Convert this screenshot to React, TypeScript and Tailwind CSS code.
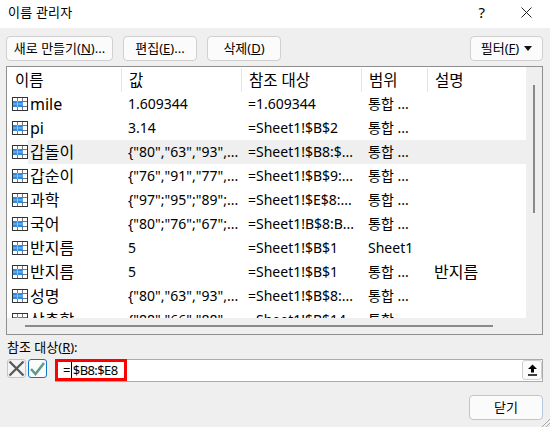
import React from 'react';

const font = { fontFamily: '"Noto Sans", "Noto Sans CJK KR", sans-serif' };

const rows = [
  ['mile', '1.609344', '=1.609344', '통합 ...', ''],
  ['pi', '3.14', '=Sheet1!$B$2', '통합 ...', ''],
  ['갑돌이', '{"80","63","93",...', '=Sheet1!$B8:$...', '통합 ...', ''],
  ['갑순이', '{"76","91","77",...', '=Sheet1!$B$9:...', '통합 ...', ''],
  ['과학', '{"97";"95";"89";...', '=Sheet1!$E$8:...', '통합 ...', ''],
  ['국어', '{"80";"76";"67";...', '=Sheet1!B$8:B...', '통합 ...', ''],
  ['반지름', '5', '=Sheet1!$B$1', 'Sheet1', ''],
  ['반지름', '5', '=Sheet1!$B$1', '통합 ...', '반지름'],
  ['성명', '{"80","63","93",...', '=Sheet1!$B$8:...', '통합 ...', ''],
  ['상총합', '{"88","66","88",...', '=Sheet1!$B$14', '통합 ...', ''],
];

function NameIcon() {
  return (
    <svg width="16" height="14" viewBox="0 0 16 14" className="shrink-0">
      <rect x="0.5" y="0.5" width="15" height="13" fill="#fff" stroke="#333" />
      <path d="M5.5 1V13M10.5 1V13M1 4.5H15M1 9.5H15" stroke="#777" fill="none" />
      <rect x="1" y="4" width="10" height="6" fill="#2f8be0" />
      <path d="M5.5 4V10M1 7H11" stroke="#8cc0ee" fill="none" />
    </svg>
  );
}

function Btn({ className, children }: { className: string; children: React.ReactNode }) {
  return (
    <div className={`flex h-[25px] items-center justify-center rounded-[4px] border border-[#cfcfcf] bg-[#fbfbfb] text-[13px] text-black ${className}`}>
      {children}
    </div>
  );
}

export default function App() {
  return (
    <div style={font} className="relative flex h-[427px] w-[550px] flex-col overflow-hidden bg-[#efefef] text-black">
      {/* Title bar */}
      <div className="flex h-[28px] shrink-0 items-start justify-between bg-white pl-[8px] pr-[18px]">
        <span className="mt-[3px] text-[13px] leading-[18px] tracking-[0.2px]">이름 관리자</span>
        <div className="flex items-center gap-[36px] pt-[3px]">
          <span className="text-[15px] leading-[18px]">?</span>
          <svg width="11" height="11" viewBox="0 0 11 11">
            <path d="M0.5 0.5L10.5 10.5M10.5 0.5L0.5 10.5" stroke="#222" fill="none" />
          </svg>
        </div>
      </div>

      {/* Toolbar */}
      <div className="mt-[8px] flex shrink-0 pl-[6px] pr-[7px]">
        <Btn className="w-[107px]">
          <span>새로 만들기(<u>N</u>)...</span>
        </Btn>
        <Btn className="ml-[10px] w-[74px]">
          <span>편집(<u>E</u>)...</span>
        </Btn>
        <Btn className="ml-[10px] w-[74px]">
          <span>삭제(<u>D</u>)</span>
        </Btn>
        <Btn className="ml-auto w-[73px] gap-[5px]">
          <span>필터(<u>F</u>)</span>
          <svg width="8" height="5" viewBox="0 0 8 5">
            <path d="M0 0H8L4 5Z" fill="#111" />
          </svg>
        </Btn>
      </div>

      {/* Name list */}
      <div className="ml-[6px] mr-[7px] mt-[5px] flex h-[269px] shrink-0 flex-col border border-[#8f8f8f] bg-[#efefef]">
        <div className="flex min-h-0 flex-1">
          <div className="w-[519px] shrink-0 overflow-hidden bg-white">
            <div className="mt-[1px] grid h-[24px] grid-cols-[114px_120px_120px_66px_99px] text-[15.5px]">
              <div className="pl-[8px] leading-[24px]">이름</div>
              {['값', '참조 대상', '범위', '설명'].map((h) => (
                <div key={h} className="border-l border-[#e5e5e5] pl-[7px] leading-[24px]">
                  {h}
                </div>
              ))}
            </div>
            {rows.map((r, i) => (
              <div key={i} className="grid h-[24px] grid-cols-[114px_120px_120px_66px_99px] items-center text-[14px]">
                <div className="relative flex h-full items-center pl-[5px]">
                  {i === 2 && <div className="absolute inset-y-0 left-[21px] right-0 bg-[#efefef]" />}
                  <div className="relative flex items-center gap-[2px] text-[16px]">
                    <NameIcon />
                    <span className="leading-[22px]">{r[0]}</span>
                  </div>
                </div>
                {r.slice(1).map((c, j) => (
                  <div
                    key={j}
                    className={`flex h-full items-center overflow-hidden whitespace-nowrap pb-[1px] pl-[7px] ${j === 3 ? 'text-[16px]' : ''} ${i === 2 ? 'bg-[#efefef]' : ''}`}
                  >
                    {c}
                  </div>
                ))}
              </div>
            ))}
          </div>
          {/* Vertical scrollbar */}
          <div className="flex-1 pl-[7px] pt-[18px]">
            <div className="h-[128px] w-[2px] bg-[#8a8a8a]" />
          </div>
        </div>
        {/* Horizontal scrollbar */}
        <div className="flex h-[16px] shrink-0 items-center pb-[1px] pl-[18px]">
          <div className="h-[2px] w-[468px] bg-[#8a8a8a]" />
        </div>
      </div>

      {/* Reference field */}
      <div className="mt-[3px] px-[7px] text-[13px] leading-[18px]">
        참조 대상(<u>R</u>):
      </div>
      <div className="mt-[3px] flex items-start pl-[7px] pr-[7px]">
        <div className="flex h-[19px] w-[19px] items-center justify-center rounded-[3px] border border-[#c4c4c4] bg-[#f4f4f4]">
          <svg width="17" height="17" viewBox="0 0 17 17">
            <path d="M1.5 1.5L15.5 15.5M15.5 1.5L1.5 15.5" stroke="#5a5a5a" strokeWidth="2.4" fill="none" />
          </svg>
        </div>
        <div className="ml-[2px] flex h-[19px] w-[19px] items-center justify-center rounded-[3px] border border-[#0f76c8] bg-[#fbfbfb]">
          <svg width="15" height="15" viewBox="0 0 15 15">
            <path d="M1 8L5.5 13L14 2" stroke="#5f9a8a" strokeWidth="2.6" fill="none" />
          </svg>
        </div>
        <div className="relative ml-[8px] flex h-[23px] flex-1 items-center border border-[#ababab] bg-white pl-[7px] text-[13px] tracking-[-0.6px]">
          <span className="relative">
            =<span className="mx-[1px] inline-block h-[18px] w-[1px] bg-black align-[-4px]" />$B8:$E8
          </span>
          <div className="absolute left-[-1px] top-[-1px] h-[22px] w-[72px] border-[3px] border-[#ff0000]" />
          <div className="absolute right-0 top-0 flex h-[20px] w-[20px] items-center justify-center rounded-[3px] border border-[#cfcfcf] bg-[#fbfbfb]">
            <svg width="11" height="12" viewBox="0 0 11 12">
              <path d="M5.5 0.5L10 5H7V8.5H4V5H1Z" fill="#000" />
              <path d="M1 11H10" stroke="#000" strokeWidth="1.5" />
            </svg>
          </div>
        </div>
      </div>

      {/* Footer */}
      <div className="mt-[13px] flex justify-end pr-[7px]">
        <div className="flex h-[25px] w-[74px] items-center justify-center rounded-[4px] border border-[#b5c7dc] bg-[#fbfbfb] text-[13px]">
          닫기
        </div>
      </div>

      {/* Resize grip */}
      <svg width="9" height="9" viewBox="0 0 9 9" className="absolute bottom-0 right-0">
        <path d="M9 1L1 9M9 5L5 9" stroke="#a8a8a8" fill="none" />
      </svg>
    </div>
  );
}
